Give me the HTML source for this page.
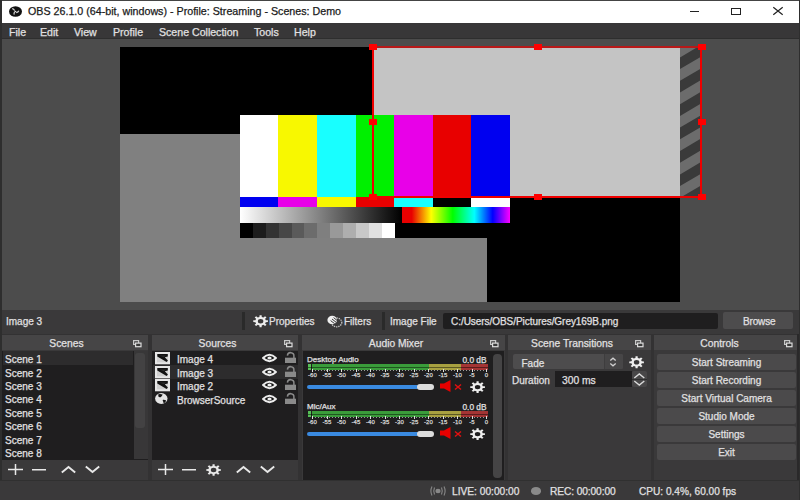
<!DOCTYPE html>
<html><head><meta charset="utf-8">
<style>
*{margin:0;padding:0;box-sizing:border-box}
html,body{width:800px;height:500px;overflow:hidden;background:#333233;font-family:"Liberation Sans",sans-serif;color:#e1e0e1}
body div,body span{-webkit-text-stroke:0.25px currentColor}
.a{position:absolute}
.t{position:absolute;white-space:nowrap;line-height:1}
svg{position:absolute;overflow:visible}
.dt{position:absolute;top:335px;height:15px;background:#464546}
.dtt{position:absolute;top:339px;font-size:10.3px;line-height:1;white-space:nowrap;color:#e1e0e1;text-align:center}
.list{position:absolute;background:#1f1e1f}
.btn{position:absolute;background:#4d4c4d;border-radius:2px}
.menu span{position:absolute;top:27px;font-size:10.6px;line-height:1;white-space:nowrap;color:#e1e0e1}
.sc{position:absolute;left:5px;font-size:10px;line-height:1;white-space:nowrap}
.src{position:absolute;left:177px;font-size:10px;line-height:1;white-space:nowrap}
.cb{position:absolute;left:657px;width:139px;height:16px;background:#4b4a4b;border-radius:2px;font-size:10px;line-height:18px;text-align:center;color:#e1e0e1}
.h{position:absolute;width:8px;height:6px;background:#f00}
.tb{position:absolute;background:#3a393a}
.sm{position:absolute;font-size:6px;line-height:1;color:#d8d8d8;white-space:nowrap;transform:translateX(-50%)}
</style></head><body>


<!-- title bar -->
<div class="a" style="left:0;top:0;width:800px;height:23px;background:#fff"></div>
<svg style="left:9px;top:5.7px" width="13" height="11" viewBox="0 0 13 11"><ellipse cx="6.5" cy="5.5" rx="6.5" ry="5.3" fill="#111"/><path d="M3.2 2.6 Q5 2.8 5.6 4.6 M9.8 4.8 Q9.2 6.4 7.2 6.6 M5.2 8.6 Q4.6 6.8 5.8 5.6" stroke="#ddd" stroke-width="1.2" fill="none"/><circle cx="6.5" cy="5.5" r="0.8" fill="#ddd"/></svg>
<div class="t" style="left:28px;top:6px;font-size:10.7px;color:#1a1a1a">OBS 26.1.0 (64-bit, windows) - Profile: Streaming - Scenes: Demo</div>
<div class="a" style="left:690px;top:10.5px;width:9px;height:1.2px;background:#222"></div>
<div class="a" style="left:730.5px;top:7.5px;width:10px;height:7.5px;border:1.2px solid #222"></div>
<svg style="left:773px;top:7px" width="10" height="8" viewBox="0 0 10 8"><path d="M0.3 0.3L9.7 7.7M9.7 0.3L0.3 7.7" stroke="#222" stroke-width="1.2"/></svg>
<div class="a" style="left:0;top:0;width:800px;height:1px;background:#444"></div>
<!-- menu -->
<div class="a" style="left:0;top:23px;width:800px;height:16px;background:#383738"></div>
<div class="menu">
<span style="left:9px">File</span><span style="left:40px">Edit</span><span style="left:74px">View</span><span style="left:113px">Profile</span><span style="left:159px">Scene Collection</span><span style="left:254px">Tools</span><span style="left:294px">Help</span>
</div>
<!-- preview -->
<div class="a" style="left:0;top:39px;width:800px;height:271px;background:#4c4c4c"></div>
<div class="a" style="left:120px;top:47px;width:560px;height:255px;background:#000"></div>
<div class="a" style="left:120px;top:134px;width:367px;height:168px;background:#808080"></div>
<div class="a" style="left:373px;top:47px;width:307px;height:150px;background:#c4c4c4"></div>
<svg style="left:680px;top:47px;overflow:hidden" width="21" height="150" viewBox="0 0 21 150"><rect width="21" height="150" fill="#6c6c6c"/><path d="M0 -36.40 L21 -48.80 L21 -37.10 L0 -24.70 Z M0 -13.00 L21 -25.40 L21 -13.70 L0 -1.30 Z M0 10.40 L21 -2.00 L21 9.70 L0 22.10 Z M0 33.80 L21 21.40 L21 33.10 L0 45.50 Z M0 57.20 L21 44.80 L21 56.50 L0 68.90 Z M0 80.60 L21 68.20 L21 79.90 L0 92.30 Z M0 104.00 L21 91.60 L21 103.30 L0 115.70 Z M0 127.40 L21 115.00 L21 126.70 L0 139.10 Z M0 150.80 L21 138.40 L21 150.10 L0 162.50 Z M0 174.20 L21 161.80 L21 173.50 L0 185.90 Z" fill="#3a3a3a"/></svg>
<!-- color bars -->
<div class="a" style="left:240px;top:115px;width:270px;height:82px;background:linear-gradient(90deg,#fff 0 38.5px,#f8f800 38.5px 77px,#18ffff 77px 116px,#00f000 116px 154px,#e800e8 154px 192.5px,#e80000 192.5px 231px,#0000f0 231px 270px)"></div>
<div class="a" style="left:240px;top:197px;width:270px;height:10px;background:linear-gradient(90deg,#0000f0 0 38.5px,#e800e8 38.5px 77px,#f8f800 77px 116px,#e80000 116px 154px,#18ffff 154px 192.5px,#000 192.5px 231px,#fff 231px 270px)"></div>
<div class="a" style="left:240px;top:207px;width:162px;height:16px;background:linear-gradient(90deg,#fff,#000)"></div>
<div class="a" style="left:402px;top:207px;width:108px;height:16px;background:linear-gradient(90deg,#e80000 0%,#e80000 9%,#ffff00 27%,#00ff00 47%,#00ffff 67%,#0000ff 84%,#ff00ff 100%)"></div>
<div class="a" style="left:240px;top:223px;width:270px;height:15px;background:linear-gradient(90deg,#000 0 12.9px,#1c1c1c 12.9px 25.8px,#333 25.8px 38.7px,#474747 38.7px 51.6px,#5a5a5a 51.6px 64.5px,#6c6c6c 64.5px 77.4px,#7f7f7f 77.4px 90.3px,#999 90.3px 103.2px,#aeaeae 103.2px 116.1px,#c8c8c8 116.1px 129px,#e0e0e0 129px 141.9px,#fff 141.9px 155px,#000 155px 270px)"></div>
<!-- selection box -->
<div class="a" style="left:372px;top:46px;width:330px;height:152px;border:2px solid #e00;border-top-color:#b81818"></div>
<div class="h" style="left:368.5px;top:44px"></div>
<div class="h" style="left:534px;top:44px"></div>
<div class="h" style="left:698px;top:44px"></div>
<div class="h" style="left:368.5px;top:119px"></div>
<div class="h" style="left:698px;top:119px"></div>
<div class="h" style="left:368.5px;top:194px"></div>
<div class="h" style="left:534px;top:194px"></div>
<div class="h" style="left:698px;top:194px"></div>
<!-- context bar -->
<div class="a" style="left:0;top:310px;width:800px;height:24px;background:#3a393a"></div>
<div class="t" style="left:6px;top:317px;font-size:10px">Image 3</div>
<div class="a" style="left:242px;top:312px;width:3px;height:18px;background:#2a2a2a"></div>
<svg style="left:252.5px;top:314.5px" width="15.2" height="12.4" viewBox="0 0 16 16" preserveAspectRatio="none"><path fill-rule="evenodd" stroke-linejoin="round" d="M6.78 2.53 L6.90 0.28 L9.10 0.28 L9.22 2.53 L11.00 3.27 L12.68 1.76 L14.24 3.32 L12.73 5.00 L13.47 6.78 L15.72 6.90 L15.72 9.10 L13.47 9.22 L12.73 11.00 L14.24 12.68 L12.68 14.24 L11.00 12.73 L9.22 13.47 L9.10 15.72 L6.90 15.72 L6.78 13.47 L5.00 12.73 L3.32 14.24 L1.76 12.68 L3.27 11.00 L2.53 9.22 L0.28 9.10 L0.28 6.90 L2.53 6.78 L3.27 5.00 L1.76 3.32 L3.32 1.76 L5.00 3.27 Z M5.10 8.00 a2.90 2.90 0 1 0 5.80 0 a2.90 2.90 0 1 0 -5.80 0 Z" fill="#eee"/></svg>
<div class="t" style="left:269px;top:317px;font-size:10px">Properties</div>
<svg style="left:327px;top:314.5px" width="16" height="13" viewBox="0 0 16 13"><ellipse cx="9.6" cy="7.4" rx="5.2" ry="4.4" fill="none" stroke="#c8c8c8" stroke-width="1.3" stroke-dasharray="1.3 0.9"/><ellipse cx="5.2" cy="5" rx="4.8" ry="4.3" fill="#f0f0f0"/><path d="M3.6 5.6 L7.6 8.6 M5 4 L9 7.2 M6.6 2.6 L10 5.4" stroke="#3a393a" stroke-width="1"/></svg>
<div class="t" style="left:344px;top:317px;font-size:10px">Filters</div>
<div class="a" style="left:382px;top:312px;width:3px;height:18px;background:#2a2a2a"></div>
<div class="t" style="left:390px;top:317px;font-size:10px">Image File</div>
<div class="a" style="left:443px;top:313px;width:275px;height:16px;background:#1f1e1f;border-radius:2px"></div>
<div class="t" style="left:451px;top:317px;font-size:10px;letter-spacing:-0.05px">C:/Users/OBS/Pictures/Grey169B.png</div>
<div class="btn" style="left:723px;top:312px;width:70px;height:17px"></div>
<div class="t" style="left:743px;top:317px;font-size:10px;letter-spacing:-0.15px">Browse</div>
<!-- dock titles -->
<div class="dt" style="left:0;width:148px"></div>
<div class="dt" style="left:152px;width:146px"></div>
<div class="dt" style="left:302px;width:203px"></div>
<div class="dt" style="left:508px;width:143px"></div>
<div class="dt" style="left:654px;width:146px"></div>
<div class="dtt" style="left:0;width:133px">Scenes</div>
<div class="dtt" style="left:152px;width:131px">Sources</div>
<div class="dtt" style="left:302px;width:188px">Audio Mixer</div>
<div class="dtt" style="left:508px;width:128px">Scene Transitions</div>
<div class="dtt" style="left:654px;width:131px">Controls</div>
<svg style="left:133px;top:340px" width="9" height="7"><rect x="0.6" y="0.6" width="5" height="3.8" fill="none" stroke="#c8c8c8" stroke-width="1.2"/><rect x="2.6" y="3.1" width="5.4" height="3.6" fill="#3a3a3a" stroke="#dcdcdc" stroke-width="1.2"/></svg>
<svg style="left:284px;top:340px" width="9" height="7"><rect x="0.6" y="0.6" width="5" height="3.8" fill="none" stroke="#c8c8c8" stroke-width="1.2"/><rect x="2.6" y="3.1" width="5.4" height="3.6" fill="#3a3a3a" stroke="#dcdcdc" stroke-width="1.2"/></svg>
<svg style="left:490px;top:340px" width="9" height="7"><rect x="0.6" y="0.6" width="5" height="3.8" fill="none" stroke="#c8c8c8" stroke-width="1.2"/><rect x="2.6" y="3.1" width="5.4" height="3.6" fill="#3a3a3a" stroke="#dcdcdc" stroke-width="1.2"/></svg>
<svg style="left:635px;top:340px" width="9" height="7"><rect x="0.6" y="0.6" width="5" height="3.8" fill="none" stroke="#c8c8c8" stroke-width="1.2"/><rect x="2.6" y="3.1" width="5.4" height="3.6" fill="#3a3a3a" stroke="#dcdcdc" stroke-width="1.2"/></svg>
<svg style="left:784px;top:340px" width="9" height="7"><rect x="0.6" y="0.6" width="5" height="3.8" fill="none" stroke="#c8c8c8" stroke-width="1.2"/><rect x="2.6" y="3.1" width="5.4" height="3.6" fill="#3a3a3a" stroke="#dcdcdc" stroke-width="1.2"/></svg>
<!-- dock bodies -->
<div class="tb" style="left:0;top:350px;width:148px;height:130px"></div>
<div class="tb" style="left:152px;top:350px;width:146px;height:130px"></div>
<div class="tb" style="left:302px;top:350px;width:203px;height:130px"></div>
<div class="tb" style="left:508px;top:350px;width:143px;height:130px"></div>
<div class="tb" style="left:654px;top:350px;width:143px;height:130px"></div>
<!-- scenes -->
<div class="list" style="left:2px;top:351px;width:146px;height:109px"></div>
<div class="a" style="left:133.5px;top:351px;width:14px;height:108px;background:#383738"></div>
<div class="a" style="left:3px;top:351px;width:130px;height:13.8px;background:#2d2c2d"></div>
<div class="a" style="left:135.3px;top:353px;width:10px;height:75px;background:#434243;border-radius:3px"></div>
<div class="sc" style="top:355.30px">Scene 1</div>
<div class="sc" style="top:368.67px">Scene 2</div>
<div class="sc" style="top:382.04px">Scene 3</div>
<div class="sc" style="top:395.41px">Scene 4</div>
<div class="sc" style="top:408.78px">Scene 5</div>
<div class="sc" style="top:422.15px">Scene 6</div>
<div class="sc" style="top:435.52px">Scene 7</div>
<div class="sc" style="top:448.89px">Scene 8</div>
<svg style="left:7.5px;top:464px" width="15" height="11"><path d="M7.5 0 V11 M0 5.5 H15" stroke="#e8e8e8" stroke-width="1.5"/></svg>
<svg style="left:31.5px;top:468.5px" width="14" height="2"><path d="M0 0.75 H14" stroke="#e8e8e8" stroke-width="1.5"/></svg>
<svg style="left:60.5px;top:466px" width="15" height="7"><path d="M0.8 6.4 L7.5 0.9 L14.2 6.4" fill="none" stroke="#e8e8e8" stroke-width="1.9"/></svg>
<svg style="left:84.5px;top:466px" width="15" height="7"><path d="M0.8 0.6 L7.5 6.1 L14.2 0.6" fill="none" stroke="#e8e8e8" stroke-width="1.9"/></svg>
<!-- sources -->
<div class="list" style="left:152px;top:351px;width:146px;height:109px"></div>
<div class="a" style="left:153px;top:365px;width:145px;height:13.5px;background:#2d2c2d"></div>
<svg style="left:155px;top:352px" width="15" height="12.5"><rect x="0" y="0" width="15" height="12.3" fill="#e6e6e6"/><rect x="2" y="2" width="11" height="8.3" fill="#cfcfcf"/><path d="M2.3 2 L12.8 2 L12.8 4.6 L9.8 5.2 L12.9 8.6 L11.6 10 L2.3 4.6 Z" fill="#111"/><path d="M4.5 3.6 L11 3.6 L8.8 5.2 Z" fill="#2a2a2a"/></svg>
<svg style="left:155px;top:365.5px" width="15" height="12.5"><rect x="0" y="0" width="15" height="12.3" fill="#e6e6e6"/><rect x="2" y="2" width="11" height="8.3" fill="#cfcfcf"/><path d="M2.3 2 L12.8 2 L12.8 4.6 L9.8 5.2 L12.9 8.6 L11.6 10 L2.3 4.6 Z" fill="#111"/><path d="M4.5 3.6 L11 3.6 L8.8 5.2 Z" fill="#2a2a2a"/></svg>
<svg style="left:155px;top:379px" width="15" height="12.5"><rect x="0" y="0" width="15" height="12.3" fill="#e6e6e6"/><rect x="2" y="2" width="11" height="8.3" fill="#cfcfcf"/><path d="M2.3 2 L12.8 2 L12.8 4.6 L9.8 5.2 L12.9 8.6 L11.6 10 L2.3 4.6 Z" fill="#111"/><path d="M4.5 3.6 L11 3.6 L8.8 5.2 Z" fill="#2a2a2a"/></svg>
<svg style="left:155.4px;top:393px" width="13" height="11" viewBox="0 0 13 11"><ellipse cx="6.3" cy="5.5" rx="6.2" ry="5.4" fill="#e4e4e4"/><path d="M3.3 1.2 Q5.5 0.6 7.6 1.5 Q7.2 3.4 5.6 4.2 Q3.8 4.6 3.3 3.2 Z" fill="#151515"/><path d="M8 6.8 Q9.8 6.6 11.2 7.6 Q10.5 9.5 9 10.3 Q8 9.5 8.2 8.6 Q7.2 8 8 6.8 Z" fill="#151515"/></svg>
<div class="src" style="top:355px">Image 4</div>
<div class="src" style="top:368.5px">Image 3</div>
<div class="src" style="top:382px">Image 2</div>
<div class="src" style="top:395.5px">BrowserSource</div>
<svg style="left:261.8px;top:354.0px" width="15" height="8"><path d="M1 4 Q7.5 -2.4 14 4 Q7.5 10.4 1 4 Z" fill="#111" stroke="#ececec" stroke-width="1.9" stroke-linejoin="round"/><ellipse cx="7.5" cy="4" rx="2.1" ry="1.5" fill="#f0f0f0"/></svg>
<svg style="left:261.8px;top:367.5px" width="15" height="8"><path d="M1 4 Q7.5 -2.4 14 4 Q7.5 10.4 1 4 Z" fill="#111" stroke="#ececec" stroke-width="1.9" stroke-linejoin="round"/><ellipse cx="7.5" cy="4" rx="2.1" ry="1.5" fill="#f0f0f0"/></svg>
<svg style="left:261.8px;top:381.0px" width="15" height="8"><path d="M1 4 Q7.5 -2.4 14 4 Q7.5 10.4 1 4 Z" fill="#111" stroke="#ececec" stroke-width="1.9" stroke-linejoin="round"/><ellipse cx="7.5" cy="4" rx="2.1" ry="1.5" fill="#f0f0f0"/></svg>
<svg style="left:261.8px;top:394.5px" width="15" height="8"><path d="M1 4 Q7.5 -2.4 14 4 Q7.5 10.4 1 4 Z" fill="#111" stroke="#ececec" stroke-width="1.9" stroke-linejoin="round"/><ellipse cx="7.5" cy="4" rx="2.1" ry="1.5" fill="#f0f0f0"/></svg>
<svg style="left:285px;top:353px" width="12" height="11"><path d="M2.4 2.6 A3.25 3.25 0 0 1 8.9 3.2 L8.9 5.5" fill="none" stroke="#8a8a8a" stroke-width="1.5"/><rect x="0" y="4.7" width="11" height="5.3" fill="#8a8a8a"/></svg>
<svg style="left:285px;top:366.5px" width="12" height="11"><path d="M2.4 2.6 A3.25 3.25 0 0 1 8.9 3.2 L8.9 5.5" fill="none" stroke="#8a8a8a" stroke-width="1.5"/><rect x="0" y="4.7" width="11" height="5.3" fill="#8a8a8a"/></svg>
<svg style="left:285px;top:380px" width="12" height="11"><path d="M2.4 2.6 A3.25 3.25 0 0 1 8.9 3.2 L8.9 5.5" fill="none" stroke="#8a8a8a" stroke-width="1.5"/><rect x="0" y="4.7" width="11" height="5.3" fill="#8a8a8a"/></svg>
<svg style="left:285px;top:393.5px" width="12" height="11"><path d="M2.4 2.6 A3.25 3.25 0 0 1 8.9 3.2 L8.9 5.5" fill="none" stroke="#8a8a8a" stroke-width="1.5"/><rect x="0" y="4.7" width="11" height="5.3" fill="#8a8a8a"/></svg>
<svg style="left:158px;top:464px" width="15" height="11"><path d="M7.5 0 V11 M0 5.5 H15" stroke="#e8e8e8" stroke-width="1.5"/></svg>
<svg style="left:182px;top:468.5px" width="14" height="2"><path d="M0 0.75 H14" stroke="#e8e8e8" stroke-width="1.5"/></svg>
<svg style="left:205.6px;top:463.8px" width="15.2" height="12" viewBox="0 0 16 16" preserveAspectRatio="none"><path fill-rule="evenodd" stroke-linejoin="round" d="M6.78 2.53 L6.90 0.28 L9.10 0.28 L9.22 2.53 L11.00 3.27 L12.68 1.76 L14.24 3.32 L12.73 5.00 L13.47 6.78 L15.72 6.90 L15.72 9.10 L13.47 9.22 L12.73 11.00 L14.24 12.68 L12.68 14.24 L11.00 12.73 L9.22 13.47 L9.10 15.72 L6.90 15.72 L6.78 13.47 L5.00 12.73 L3.32 14.24 L1.76 12.68 L3.27 11.00 L2.53 9.22 L0.28 9.10 L0.28 6.90 L2.53 6.78 L3.27 5.00 L1.76 3.32 L3.32 1.76 L5.00 3.27 Z M5.10 8.00 a2.90 2.90 0 1 0 5.80 0 a2.90 2.90 0 1 0 -5.80 0 Z" fill="#e8e8e8"/></svg>
<svg style="left:235.5px;top:466px" width="15" height="7"><path d="M0.8 6.4 L7.5 0.9 L14.2 6.4" fill="none" stroke="#e8e8e8" stroke-width="1.9"/></svg>
<svg style="left:259.5px;top:466px" width="15" height="7"><path d="M0.8 0.6 L7.5 6.1 L14.2 0.6" fill="none" stroke="#e8e8e8" stroke-width="1.9"/></svg>
<!-- audio mixer -->
<div class="list" style="left:303px;top:351px;width:201px;height:129px"></div>
<div class="a" style="left:492.6px;top:353.5px;width:9.8px;height:124.5px;background:#454445;border-radius:4px"></div>
<div class="a" style="left:0;top:0px;width:800px;height:1px">
<div class="t" style="left:307px;top:355.5px;font-size:8px">Desktop Audio</div>
<div class="t" style="left:462.5px;top:355.5px;font-size:8.3px">0.0 dB</div>
<div class="a" style="left:307.5px;top:364px;width:180px;height:6px;background:linear-gradient(90deg,#56c056 0 3.2px,#1f1e1f 3.2px 4px,#3a9c3a 4px 121px,#a8a040 121px 153px,#a43434 153px)"></div>
<div class="a" style="left:307.5px;top:366.6px;width:180px;height:0.8px;background:rgba(0,0,0,.45)"></div>
<div class="a" style="left:312px;top:369.5px;width:176px;height:1.5px;background:repeating-linear-gradient(90deg,#999 0 1px,transparent 1px 2.9px)"></div>
<div class="a" style="left:312.0px;top:369px;width:1px;height:2.5px;background:#ddd"></div><div class="a" style="left:326.5px;top:369px;width:1px;height:2.5px;background:#ddd"></div><div class="a" style="left:341.0px;top:369px;width:1px;height:2.5px;background:#ddd"></div><div class="a" style="left:355.5px;top:369px;width:1px;height:2.5px;background:#ddd"></div><div class="a" style="left:370.0px;top:369px;width:1px;height:2.5px;background:#ddd"></div><div class="a" style="left:384.5px;top:369px;width:1px;height:2.5px;background:#ddd"></div><div class="a" style="left:399.0px;top:369px;width:1px;height:2.5px;background:#ddd"></div><div class="a" style="left:413.5px;top:369px;width:1px;height:2.5px;background:#ddd"></div><div class="a" style="left:428.0px;top:369px;width:1px;height:2.5px;background:#ddd"></div><div class="a" style="left:442.5px;top:369px;width:1px;height:2.5px;background:#ddd"></div><div class="a" style="left:457.0px;top:369px;width:1px;height:2.5px;background:#ddd"></div><div class="a" style="left:471.5px;top:369px;width:1px;height:2.5px;background:#ddd"></div><div class="a" style="left:486.0px;top:369px;width:1px;height:2.5px;background:#ddd"></div>
<div class="sm" style="left:312.4px;top:371.6px">-60</div><div class="sm" style="left:326.9px;top:371.6px">-55</div><div class="sm" style="left:341.4px;top:371.6px">-50</div><div class="sm" style="left:355.9px;top:371.6px">-45</div><div class="sm" style="left:370.4px;top:371.6px">-40</div><div class="sm" style="left:384.9px;top:371.6px">-35</div><div class="sm" style="left:399.4px;top:371.6px">-30</div><div class="sm" style="left:413.9px;top:371.6px">-25</div><div class="sm" style="left:428.4px;top:371.6px">-20</div><div class="sm" style="left:442.9px;top:371.6px">-15</div><div class="sm" style="left:457.4px;top:371.6px">-10</div><div class="sm" style="left:471.9px;top:371.6px">-5</div><div class="sm" style="left:486.4px;top:371.6px">0</div>
<div class="a" style="left:307px;top:384.5px;width:112px;height:4px;background:#3a8ae0;border-radius:2px"></div>
<div class="a" style="left:417px;top:383.5px;width:17px;height:6px;background:#dcdcdc;border-radius:3px"></div>
<svg style="left:440px;top:380px" width="11" height="12" viewBox="0 0 11 12"><path d="M0 3.5 H4 L10.5 0 V12 L4 8.5 H0 Z" fill="#e80000"/></svg>
<svg style="left:454px;top:384px" width="8" height="6" viewBox="0 0 8 6"><path d="M1 0.5 L7 5.5 M7 0.5 L1 5.5" stroke="#e01010" stroke-width="1.5"/></svg>
<svg style="left:470px;top:380.5px" width="15.2" height="12.2" viewBox="0 0 16 16" preserveAspectRatio="none"><path fill-rule="evenodd" stroke-linejoin="round" d="M6.78 2.53 L6.90 0.28 L9.10 0.28 L9.22 2.53 L11.00 3.27 L12.68 1.76 L14.24 3.32 L12.73 5.00 L13.47 6.78 L15.72 6.90 L15.72 9.10 L13.47 9.22 L12.73 11.00 L14.24 12.68 L12.68 14.24 L11.00 12.73 L9.22 13.47 L9.10 15.72 L6.90 15.72 L6.78 13.47 L5.00 12.73 L3.32 14.24 L1.76 12.68 L3.27 11.00 L2.53 9.22 L0.28 9.10 L0.28 6.90 L2.53 6.78 L3.27 5.00 L1.76 3.32 L3.32 1.76 L5.00 3.27 Z M5.10 8.00 a2.90 2.90 0 1 0 5.80 0 a2.90 2.90 0 1 0 -5.80 0 Z" fill="#eee"/></svg>
</div>
<div class="a" style="left:0;top:47px;width:800px;height:1px">
<div class="t" style="left:307px;top:355.5px;font-size:8px">Mic/Aux</div>
<div class="t" style="left:462.5px;top:355.5px;font-size:8.3px">0.0 dB</div>
<div class="a" style="left:307.5px;top:364px;width:180px;height:6px;background:linear-gradient(90deg,#56c056 0 3.2px,#1f1e1f 3.2px 4px,#3a9c3a 4px 121px,#a8a040 121px 153px,#a43434 153px)"></div>
<div class="a" style="left:307.5px;top:366.6px;width:180px;height:0.8px;background:rgba(0,0,0,.45)"></div>
<div class="a" style="left:312px;top:369.5px;width:176px;height:1.5px;background:repeating-linear-gradient(90deg,#999 0 1px,transparent 1px 2.9px)"></div>
<div class="a" style="left:312.0px;top:369px;width:1px;height:2.5px;background:#ddd"></div><div class="a" style="left:326.5px;top:369px;width:1px;height:2.5px;background:#ddd"></div><div class="a" style="left:341.0px;top:369px;width:1px;height:2.5px;background:#ddd"></div><div class="a" style="left:355.5px;top:369px;width:1px;height:2.5px;background:#ddd"></div><div class="a" style="left:370.0px;top:369px;width:1px;height:2.5px;background:#ddd"></div><div class="a" style="left:384.5px;top:369px;width:1px;height:2.5px;background:#ddd"></div><div class="a" style="left:399.0px;top:369px;width:1px;height:2.5px;background:#ddd"></div><div class="a" style="left:413.5px;top:369px;width:1px;height:2.5px;background:#ddd"></div><div class="a" style="left:428.0px;top:369px;width:1px;height:2.5px;background:#ddd"></div><div class="a" style="left:442.5px;top:369px;width:1px;height:2.5px;background:#ddd"></div><div class="a" style="left:457.0px;top:369px;width:1px;height:2.5px;background:#ddd"></div><div class="a" style="left:471.5px;top:369px;width:1px;height:2.5px;background:#ddd"></div><div class="a" style="left:486.0px;top:369px;width:1px;height:2.5px;background:#ddd"></div>
<div class="sm" style="left:312.4px;top:371.6px">-60</div><div class="sm" style="left:326.9px;top:371.6px">-55</div><div class="sm" style="left:341.4px;top:371.6px">-50</div><div class="sm" style="left:355.9px;top:371.6px">-45</div><div class="sm" style="left:370.4px;top:371.6px">-40</div><div class="sm" style="left:384.9px;top:371.6px">-35</div><div class="sm" style="left:399.4px;top:371.6px">-30</div><div class="sm" style="left:413.9px;top:371.6px">-25</div><div class="sm" style="left:428.4px;top:371.6px">-20</div><div class="sm" style="left:442.9px;top:371.6px">-15</div><div class="sm" style="left:457.4px;top:371.6px">-10</div><div class="sm" style="left:471.9px;top:371.6px">-5</div><div class="sm" style="left:486.4px;top:371.6px">0</div>
<div class="a" style="left:307px;top:384.5px;width:112px;height:4px;background:#3a8ae0;border-radius:2px"></div>
<div class="a" style="left:417px;top:383.5px;width:17px;height:6px;background:#dcdcdc;border-radius:3px"></div>
<svg style="left:440px;top:380px" width="11" height="12" viewBox="0 0 11 12"><path d="M0 3.5 H4 L10.5 0 V12 L4 8.5 H0 Z" fill="#e80000"/></svg>
<svg style="left:454px;top:384px" width="8" height="6" viewBox="0 0 8 6"><path d="M1 0.5 L7 5.5 M7 0.5 L1 5.5" stroke="#e01010" stroke-width="1.5"/></svg>
<svg style="left:470px;top:380.5px" width="15.2" height="12.2" viewBox="0 0 16 16" preserveAspectRatio="none"><path fill-rule="evenodd" stroke-linejoin="round" d="M6.78 2.53 L6.90 0.28 L9.10 0.28 L9.22 2.53 L11.00 3.27 L12.68 1.76 L14.24 3.32 L12.73 5.00 L13.47 6.78 L15.72 6.90 L15.72 9.10 L13.47 9.22 L12.73 11.00 L14.24 12.68 L12.68 14.24 L11.00 12.73 L9.22 13.47 L9.10 15.72 L6.90 15.72 L6.78 13.47 L5.00 12.73 L3.32 14.24 L1.76 12.68 L3.27 11.00 L2.53 9.22 L0.28 9.10 L0.28 6.90 L2.53 6.78 L3.27 5.00 L1.76 3.32 L3.32 1.76 L5.00 3.27 Z M5.10 8.00 a2.90 2.90 0 1 0 5.80 0 a2.90 2.90 0 1 0 -5.80 0 Z" fill="#eee"/></svg>
</div>
<!-- transitions -->
<div class="btn" style="left:512.5px;top:354px;width:110px;height:15px"></div>
<div class="a" style="left:603.5px;top:354px;width:19px;height:15px;background:#474647;border-left:1px solid #3e3d3e;border-radius:0 2px 2px 0"></div>
<svg style="left:609px;top:357px" width="8" height="10" viewBox="0 0 8 10"><path d="M1.3 3.6 L4 1.2 L6.7 3.6 M1.3 6.4 L4 8.8 L6.7 6.4" fill="none" stroke="#d0d0d0" stroke-width="1.3"/></svg>
<div class="t" style="left:521.5px;top:358.5px;font-size:10px">Fade</div>
<svg style="left:628.7px;top:355.6px" width="15.2" height="12.6" viewBox="0 0 16 16" preserveAspectRatio="none"><path fill-rule="evenodd" stroke-linejoin="round" d="M6.78 2.53 L6.90 0.28 L9.10 0.28 L9.22 2.53 L11.00 3.27 L12.68 1.76 L14.24 3.32 L12.73 5.00 L13.47 6.78 L15.72 6.90 L15.72 9.10 L13.47 9.22 L12.73 11.00 L14.24 12.68 L12.68 14.24 L11.00 12.73 L9.22 13.47 L9.10 15.72 L6.90 15.72 L6.78 13.47 L5.00 12.73 L3.32 14.24 L1.76 12.68 L3.27 11.00 L2.53 9.22 L0.28 9.10 L0.28 6.90 L2.53 6.78 L3.27 5.00 L1.76 3.32 L3.32 1.76 L5.00 3.27 Z M5.10 8.00 a2.90 2.90 0 1 0 5.80 0 a2.90 2.90 0 1 0 -5.80 0 Z" fill="#eee"/></svg>
<div class="t" style="left:512px;top:376px;font-size:10px">Duration</div>
<div class="a" style="left:555px;top:371px;width:77px;height:15.5px;background:#1f1e1f"></div>
<div class="t" style="left:562px;top:375.5px;font-size:10.3px">300 ms</div>
<div class="a" style="left:632px;top:371px;width:14.6px;height:16px;background:#484748;border-radius:2px"></div><div class="a" style="left:632px;top:378.8px;width:14.6px;height:1.2px;background:#2e2e2e"></div><svg style="left:632px;top:371px" width="15" height="16" viewBox="0 0 15 16"><path d="M2.3 7 L7.3 3 L12.3 7 M2.3 10 L7.3 14 L12.3 10" fill="none" stroke="#dadada" stroke-width="1.4"/></svg>
<!-- controls -->
<div class="cb" style="top:354px">Start Streaming</div>
<div class="cb" style="top:372px">Start Recording</div>
<div class="cb" style="top:390px">Start Virtual Camera</div>
<div class="cb" style="top:408px">Studio Mode</div>
<div class="cb" style="top:426px">Settings</div>
<div class="cb" style="top:444px">Exit</div>
<div class="a" style="left:797px;top:334px;width:3px;height:166px;background:#2a292a"></div>
<div class="a" style="left:0;top:0;width:1.5px;height:500px;background:#2e2e2e"></div>
<div class="a" style="left:0;top:38px;width:800px;height:1px;background:#2e2e2e"></div>
<div class="a" style="left:0;top:480px;width:800px;height:20px;background:#3a393a;border-top:1.5px solid #303030"></div>
<div class="a" style="left:798.5px;top:0;width:1.5px;height:500px;background:#2e2e2e"></div>
<!-- status bar -->
<svg style="left:429px;top:486px" width="18" height="10" viewBox="0 0 18 10"><ellipse cx="9" cy="5" rx="2.6" ry="2.2" fill="#888"/><path d="M5.5 1.5 Q4 5 5.5 8.5 M12.5 1.5 Q14 5 12.5 8.5 M3 0.5 Q0.8 5 3 9.5 M15 0.5 Q17.2 5 15 9.5" fill="none" stroke="#888" stroke-width="1.1"/></svg>
<div class="t" style="left:452px;top:487px;font-size:10.2px">LIVE: 00:00:00</div>
<div class="a" style="left:530.5px;top:487px;width:10px;height:7.5px;border-radius:50%;background:#8a8a8a"></div>
<div class="t" style="left:550px;top:487px;font-size:10.2px;letter-spacing:-0.1px">REC: 00:00:00</div>
<div class="t" style="left:639px;top:487px;font-size:10.1px">CPU: 0.4%, 60.00 fps</div>
</body></html>
